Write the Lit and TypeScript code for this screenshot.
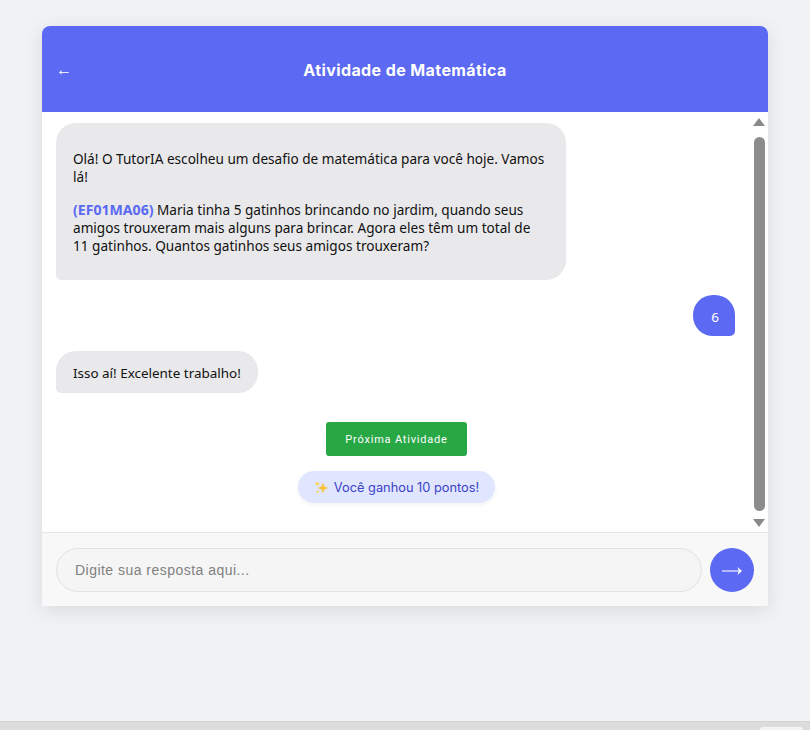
import { LitElement, html, css } from "lit";
import { customElement } from "lit/decorators.js";

@customElement("app-root")
export class AppRoot extends LitElement {
  static styles = css`
    :host {
      display: block;
      --primary: #5b69f3;
      font-family: "Noto Sans", sans-serif;
    }
    .page {
      height: 730px;
      box-sizing: border-box;
      background: #f0f2f5;
      display: flex;
      flex-direction: column;
      overflow: hidden;
    }
    .main {
      flex: 1;
      padding: 26px 42px 0;
    }
    .card {
      height: 580px;
      display: flex;
      flex-direction: column;
      background: #fff;
      border-radius: 8px 8px 0 0;
      box-shadow: 0 4px 20px rgba(0, 0, 0, 0.1);
      overflow: hidden;
    }
    .header {
      height: 86px;
      flex: none;
      display: flex;
      align-items: center;
      padding: 2px 14px 0;
      box-sizing: border-box;
      background: var(--primary);
      color: #fff;
    }
    .back {
      width: 16px;
      font-family: "Liberation Sans", sans-serif;
      font-size: 16px;
      line-height: 1;
    }
    .title {
      flex: 1;
      text-align: center;
      font-family: Inter, sans-serif;
      font-size: 16px;
      font-weight: 700;
      letter-spacing: 0.4px;
      padding-right: 16px;
    }
    .body {
      height: 420px;
      flex: none;
      display: flex;
    }
    .messages {
      flex: 1;
      min-width: 0;
      padding: 11px 18px 0 14px;
      display: flex;
      flex-direction: column;
      font-size: 13.45px;
      line-height: 18px;
      color: #111;
    }
    .bubble {
      box-sizing: border-box;
      padding: 17px;
      border-radius: 20px;
    }
    .bot {
      align-self: flex-start;
      background: #e9e9eb;
      border-bottom-left-radius: 5px;
    }
    .first {
      width: 510px;
      height: 157px;
      padding: 27px 20px 0 17px;
      font-size: 13.6px;
    }
    .first p {
      margin: 0 0 15px;
    }
    .code {
      color: var(--primary);
      font-size: 14.1px;
      font-weight: 700;
    }
    .user {
      align-self: flex-end;
      margin-top: 15px;
      width: 42px;
      height: 41px;
      padding: 13px 0 0 2px;
      text-align: center;
      color: #fff;
      background: var(--primary);
      border-bottom-right-radius: 5px;
    }
    .reply {
      margin-top: 15px;
      height: 42px;
      padding: 13px 17px 0;
      border-radius: 20px 20px 20px 5px;
    }
    .actions {
      margin: 29px 0 0 2px;
      display: flex;
      flex-direction: column;
      align-items: center;
      gap: 15px;
    }
    .next {
      width: 141px;
      height: 34px;
      border: none;
      border-radius: 3px;
      background: #28a745;
      color: #fff;
      font-family: Roboto, sans-serif;
      font-size: 11px;
      letter-spacing: 0.8px;
      padding: 0;
    }
    .points {
      width: 197px;
      height: 32px;
      box-sizing: border-box;
      padding-top: 1px;
      display: flex;
      align-items: center;
      justify-content: center;
      gap: 5px;
      border-radius: 16px;
      background: #e0e6ff;
      color: #3b42c6;
      font-family: Inter, sans-serif;
      font-size: 12.8px;
      font-weight: 400;
      box-shadow: 0 2px 5px rgba(0, 0, 0, 0.05);
    }
    .scrollbar {
      width: 15px;
      flex: none;
      display: flex;
      flex-direction: column;
      align-items: center;
      box-sizing: border-box;
      padding: 0 3px 0 0;
    }
    .arrow {
      width: 0;
      height: 0;
      border-left: 6px solid transparent;
      border-right: 6px solid transparent;
    }
    .up {
      margin-top: 6px;
      border-bottom: 8px solid #8a8a8a;
    }
    .down {
      margin-top: 8px;
      border-top: 8px solid #8a8a8a;
    }
    .thumb {
      margin-top: 11px;
      width: 11px;
      height: 374px;
      border-radius: 6px;
      background: #8c8c8c;
    }
    .composer {
      flex: 1;
      display: flex;
      align-items: center;
      gap: 8px;
      padding: 0 14px;
      background: #f8f8f8;
      border-top: 1px solid #e5e5e5;
    }
    .input {
      flex: 1;
      height: 44px;
      box-sizing: border-box;
      padding: 0 18px;
      border: 1px solid #e2e2e2;
      border-radius: 22px;
      background: #f5f5f5;
      font-family: "Liberation Sans", sans-serif;
      font-size: 14px;
      letter-spacing: 0.47px;
      color: #333;
      outline: none;
    }
    .input::placeholder {
      color: #808080;
      opacity: 1;
    }
    .send {
      width: 44px;
      height: 44px;
      flex: none;
      border: none;
      border-radius: 50%;
      padding: 2px 0 0;
      background: var(--primary);
      display: flex;
      align-items: center;
      justify-content: center;
    }
    .taskbar {
      height: 8px;
      flex: none;
      display: flex;
      justify-content: flex-end;
      padding-right: 7px;
      background: #dcdcdc;
      border-top: 1px solid #d4d4d4;
    }
    .tab {
      width: 43px;
      margin-top: 5px;
      border-radius: 3px 3px 0 0;
      background: #f4f4f4;
    }
  `;

  render() {
    return html`
      <div class="page">
        <div class="main">
          <div class="card">
            <div class="header">
              <span class="back">←</span>
              <span class="title">Atividade de Matemática</span>
            </div>
            <div class="body">
              <div class="messages">
                <div class="bubble bot first">
                  <p>Olá! O TutorIA escolheu um desafio de matemática para você hoje. Vamos lá!</p>
                  <p><span class="code">(EF01MA06)</span> Maria tinha 5 gatinhos brincando no jardim, quando seus amigos trouxeram mais alguns para brincar. Agora eles têm um total de 11 gatinhos. Quantos gatinhos seus amigos trouxeram?</p>
                </div>
                <div class="bubble user">6</div>
                <div class="bubble bot reply">Isso aí! Excelente trabalho!</div>
                <div class="actions">
                  <button class="next">Próxima Atividade</button>
                  <div class="points">
                    <svg width="15" height="15" viewBox="0 0 16 16">
                      <path fill="#f9c23c" d="M9.5 2.5 11 7l4.5 1.5L11 10l-1.5 4.5L8 10 3.5 8.5 8 7z" />
                      <path fill="#fcd53f" d="M3.5 1 4.3 3.2 6.5 4 4.3 4.8 3.5 7 2.7 4.8.5 4 2.7 3.2zM4 10.5l.6 1.4 1.4.6-1.4.6L4 14.5l-.6-1.4-1.4-.6 1.4-.6z" />
                    </svg>
                    <span>Você ganhou 10 pontos!</span>
                  </div>
                </div>
              </div>
              <div class="scrollbar">
                <div class="arrow up"></div>
                <div class="thumb"></div>
                <div class="arrow down"></div>
              </div>
            </div>
            <div class="composer">
              <input class="input" placeholder="Digite sua resposta aqui..." />
              <button class="send" aria-label="Enviar">
                <svg width="20" height="10" viewBox="0 0 20 10">
                  <path d="M0 5h18" stroke="#fff" stroke-width="1.1" />
                  <path d="M15.5 1 20 5l-4.500 4 1.300-4z" fill="#fff" />
                </svg>
              </button>
            </div>
          </div>
        </div>
        <div class="taskbar"><div class="tab"></div></div>
      </div>
    `;
  }
}
